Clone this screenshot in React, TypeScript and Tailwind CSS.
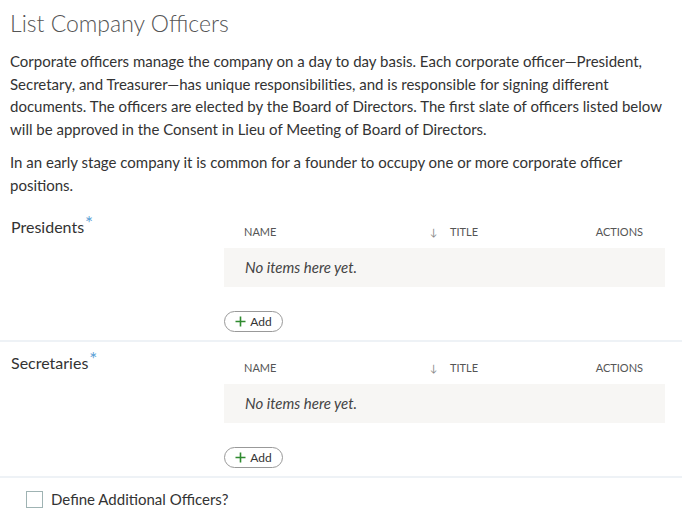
import React from "react";

function Section({ label }: { label: string }) {
  return (
    <div className="border-b-2 border-[#eef2f6]">
      <div className="flex pl-[11px] pr-[17px]">
        <div className="w-[213px] shrink-0 pt-[9px] text-[16px] text-[#333] leading-[22px]">
          {label}
          <span className="text-[#5b9fd6] text-[19px] ml-[1px] relative top-[-3px]">*</span>
        </div>
        <div className="flex-1 min-w-0 pt-[10px] pb-[8px]">
          <div className="grid grid-cols-[206px_1fr_auto] items-center h-[32px] text-[11px] text-[#555] uppercase">
            <div className="pl-[20px]">Name</div>
            <div className="flex items-center">
              <span className="text-[#888] text-[10px] w-[20px]">↓</span>
              <span>Title</span>
            </div>
            <div className="whitespace-nowrap pr-[22px]">Actions</div>
          </div>
          <div className="h-[39px] bg-[#f7f6f4] flex items-center pl-[21px] italic text-[15px] text-[#444]">
            No items here yet.
          </div>
          <div className="mt-[24px]">
            <button className="h-[21px] w-[59px] rounded-full border border-[#999] flex items-center justify-center gap-[4px] text-[12px] text-[#333]">
              <svg width="11" height="11" viewBox="0 0 11 11" className="shrink-0">
                <path d="M5.5 0.5v10M0.5 5.5h10" stroke="#2f8a2f" strokeWidth="1.6" fill="none" />
              </svg>
              <span>Add</span>
            </button>
          </div>
        </div>
      </div>
    </div>
  );
}

export default function App() {
  return (
    <div className="w-[682px] h-[526px] bg-white overflow-hidden" style={{ fontFamily: "Lato, sans-serif" }}>
      <div className="px-[10px] pt-[8px] pb-[10px]">
        <h1 className="text-[23px] font-light text-[#555] leading-[30px]">List Company Officers</h1>
        <p className="mt-[12px] text-[15px] leading-[22.5px] text-[#333]">
          Corporate officers manage the company on a day to day basis. Each corporate officer—President, Secretary, and Treasurer—has unique responsibilities, and is responsible for signing different documents. The officers are elected by the Board of Directors. The first slate of officers listed below will be approved in the Consent in Lieu of Meeting of Board of Directors.
        </p>
        <p className="mt-[11px] text-[15px] leading-[22.5px] text-[#333]">
          In an early stage company it is common for a founder to occupy one or more corporate officer positions.
        </p>
      </div>
      <Section label="Presidents" />
      <Section label="Secretaries" />
      <div className="flex items-center pl-[26px] pt-[10px] gap-[8px]">
        <div className="w-[17px] h-[17px] border border-[#9fb3b3] shrink-0" />
        <span className="text-[15px] text-[#333]">Define Additional Officers?</span>
      </div>
    </div>
  );
}
